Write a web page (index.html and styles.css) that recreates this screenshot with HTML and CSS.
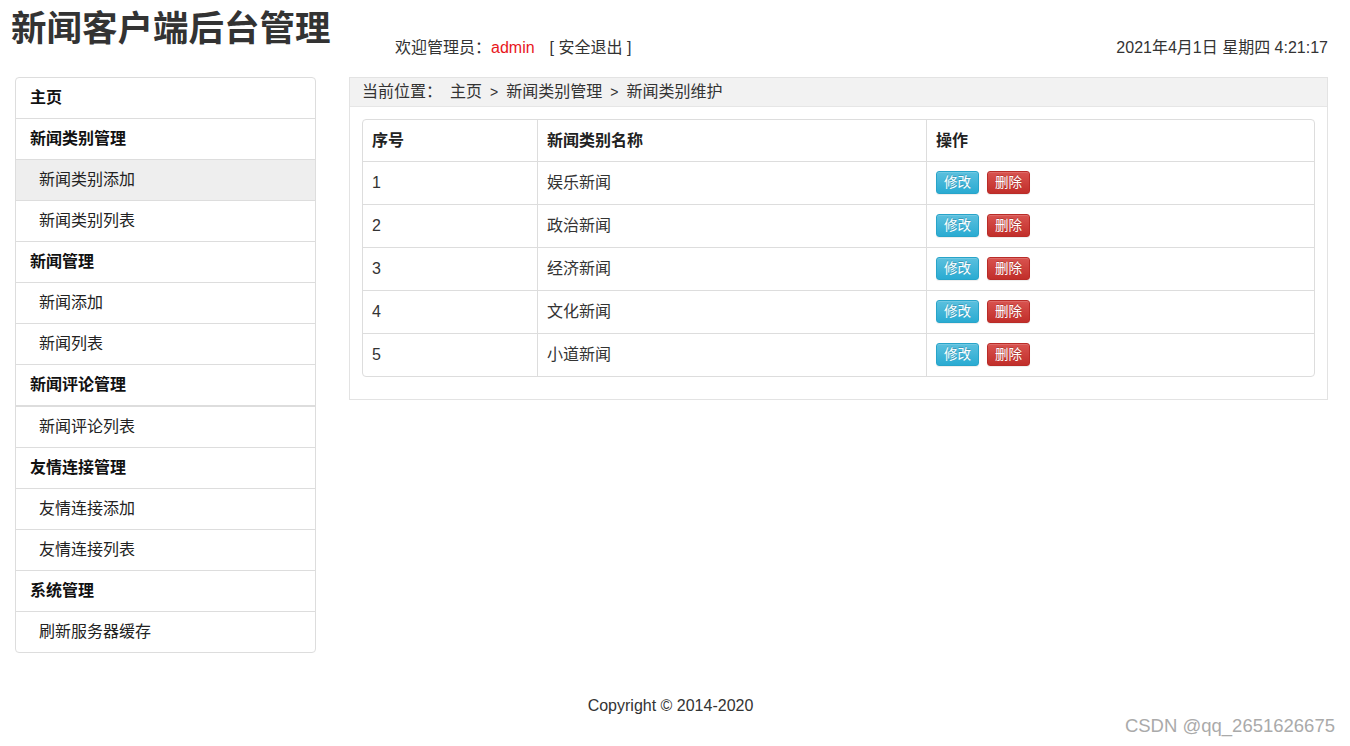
FILE: index.html
```html
<!DOCTYPE html>
<html lang="zh-CN">
<head>
<meta charset="utf-8">
<title>新闻客户端后台管理</title>
<link rel="stylesheet" href="styles.css">
</head>
<body>
<header class="top">
  <h1 class="brand">新闻客户端后台管理</h1>
  <div class="welcome">欢迎管理员：<span class="admin">admin</span><a class="logout" href="#">[ 安全退出 ]</a></div>
  <div class="clock">2021年4月1日 星期四 4:21:17</div>
</header>
<div class="layout">
  <nav class="side">
    <a class="item head" href="#">主页</a>
    <a class="item head" href="#">新闻类别管理</a>
    <a class="item sub active" href="#">新闻类别添加</a>
    <a class="item sub" href="#">新闻类别列表</a>
    <a class="item head" href="#">新闻管理</a>
    <a class="item sub" href="#">新闻添加</a>
    <a class="item sub" href="#">新闻列表</a>
    <a class="item head double" href="#">新闻评论管理</a>
    <a class="item sub" href="#">新闻评论列表</a>
    <a class="item head" href="#">友情连接管理</a>
    <a class="item sub" href="#">友情连接添加</a>
    <a class="item sub" href="#">友情连接列表</a>
    <a class="item head" href="#">系统管理</a>
    <a class="item sub" href="#">刷新服务器缓存</a>
  </nav>
  <main class="panel">
    <div class="crumb">当前位置：<span class="c-home">主页</span><span class="sep">&gt;</span>新闻类别管理<span class="sep">&gt;</span>新闻类别维护</div>
    <div class="table-wrap">
      <table class="grid">
        <thead>
          <tr><th class="c-id">序号</th><th class="c-name">新闻类别名称</th><th>操作</th></tr>
        </thead>
        <tbody>
          <tr><td>1</td><td>娱乐新闻</td><td><button class="btn info">修改</button><button class="btn danger">删除</button></td></tr>
          <tr><td>2</td><td>政治新闻</td><td><button class="btn info">修改</button><button class="btn danger">删除</button></td></tr>
          <tr><td>3</td><td>经济新闻</td><td><button class="btn info">修改</button><button class="btn danger">删除</button></td></tr>
          <tr><td>4</td><td>文化新闻</td><td><button class="btn info">修改</button><button class="btn danger">删除</button></td></tr>
          <tr><td>5</td><td>小道新闻</td><td><button class="btn info">修改</button><button class="btn danger">删除</button></td></tr>
        </tbody>
      </table>
    </div>
  </main>
</div>
<footer class="foot">Copyright © 2014-2020</footer>
<div class="watermark">CSDN @qq_2651626675</div>
</body>
</html>
```
FILE: styles.css
```css
* { box-sizing: border-box; }
html, body { margin: 0; padding: 0; }
body {
  font-family: "Liberation Sans", Arial, "Noto Sans CJK SC", sans-serif;
  font-size: 16px;
  line-height: 20px;
  color: #333;
  background: #fff;
  position: relative;
  min-height: 746px;
}
.top {
  display: flex;
  align-items: flex-start;
  height: 77px;
  padding: 0 22px 0 11px;
}
.brand {
  margin: 0;
  width: 384px;
  font-size: 35.5px;
  line-height: 40px;
  padding-top: 6px;
  font-weight: bold;
  color: #333;
  font-family: "Noto Sans CJK SC", sans-serif;
}
.welcome {
  margin-top: 38px;
  line-height: 20px;
}
.admin { color: #e8161c; }
.logout { color: #333; text-decoration: none; margin-left: 15px; }
.clock {
  margin-left: auto;
  margin-top: 38px;
  line-height: 20px;
}
.layout {
  display: flex;
  align-items: flex-start;
  gap: 33px;
  padding: 0 22px 0 15px;
}
.side {
  width: 301px;
  flex: none;
  border: 1px solid #ddd;
  border-radius: 4px;
  display: flex;
  flex-direction: column;
  background: #fff;
}
.item {
  display: block;
  padding: 10px 14px;
  line-height: 20px;
  border-top: 1px solid #ddd;
  color: #333;
  text-decoration: none;
}
.item:first-child { border-top: none; }
.item.head { font-weight: bold; color: #111; }
.item.sub { padding-left: 23px; color: #222; }
.item.active { background: #eee; }
.item.double { border-bottom: 1px solid #ddd; }
.panel {
  flex: 1;
  border: 1px solid #e3e3e3;
  padding-bottom: 22px;
}
.crumb {
  background: #f2f2f2;
  border-bottom: 1px solid #e6e6e6;
  padding: 4px 12px;
  line-height: 20px;
  color: #333;
}
.c-home { margin-left: 8px; }
.sep { margin: 0 8px 0 8px; font-size: 14px; }
.table-wrap { padding: 12px 12px 0 12px; }
.grid {
  width: 100%;
  border-collapse: separate;
  border-spacing: 0;
  border: 1px solid #ddd;
  border-radius: 4px;
}
.grid th, .grid td {
  text-align: left;
  padding: 10px 9px;
  line-height: 21px;
  border-left: 1px solid #ddd;
  border-top: 1px solid #ddd;
  vertical-align: middle;
}
.grid td { padding: 9px 9px 10px; line-height: 23px; }
.grid th:first-child, .grid td:first-child { border-left: none; }
.grid thead th { border-top: none; font-weight: bold; color: #222; }
.c-id { width: 174px; }
.c-name { width: 389px; }
.btn {
  font-family: "Liberation Sans", "Noto Sans CJK SC", sans-serif;
  font-size: 13.5px;
  line-height: 19px;
  height: 23px;
  padding: 1px 7px;
  color: #fff;
  border-radius: 3px;
  border: 1px solid;
  margin-right: 8px;
  cursor: pointer;
  text-shadow: 0 -1px 0 rgba(0,0,0,0.2);
  box-shadow: inset 0 1px 0 rgba(255,255,255,0.15), 0 1px 1px rgba(0,0,0,0.075);
  vertical-align: top;
}
.btn.info {
  background: linear-gradient(#5bc0de, #2aabd2);
  border-color: #28a4c9;
}
.btn.danger {
  background: linear-gradient(#d9534f, #c12e2a);
  border-color: #b92c28;
}
.foot {
  text-align: center;
  margin-top: 43px;
  padding-right: 9px;
  line-height: 20px;
}
.watermark {
  position: absolute;
  right: 15px;
  top: 715px;
  font-size: 18.5px;
  line-height: 22px;
  color: #aaa;
}
```
